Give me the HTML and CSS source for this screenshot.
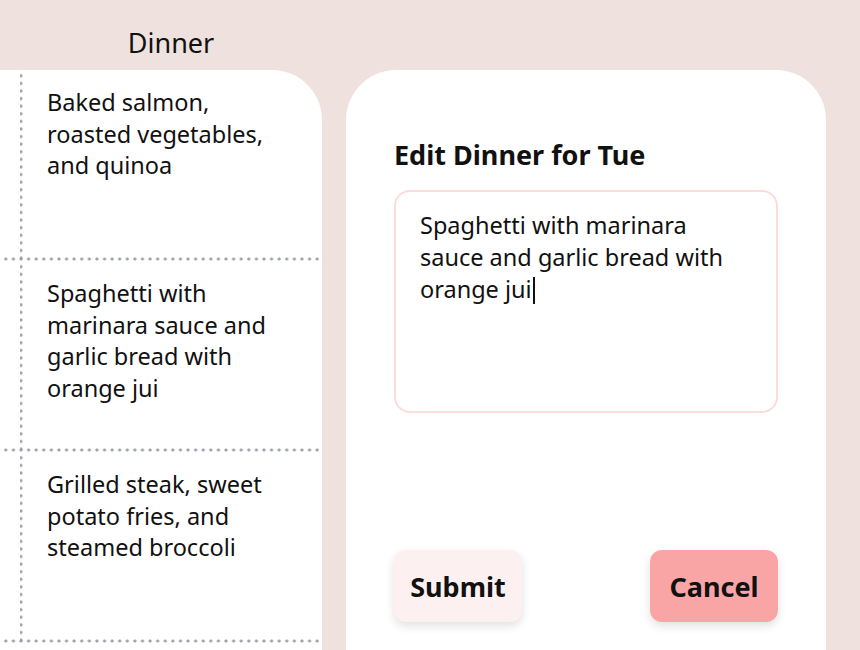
FILE: index.html
```html
<!DOCTYPE html>
<html>
<head>
<meta charset="utf-8">
<link rel="stylesheet" href="styles.css">
</head>
<body>
<div class="page">
  <section class="planner">
    <div class="col-head">
      <div class="head-spacer"></div>
      <div class="head-title">Dinner</div>
    </div>
    <div class="plan-card">
      <div class="row">
        <div class="row-gutter"></div>
        <div class="row-cell">Baked salmon, roasted vegetables, and quinoa</div>
      </div>
      <div class="row">
        <div class="row-gutter"></div>
        <div class="row-cell">Spaghetti with marinara sauce and garlic bread with orange jui</div>
      </div>
      <div class="row">
        <div class="row-gutter"></div>
        <div class="row-cell">Grilled steak, sweet potato fries, and steamed broccoli</div>
      </div>
    </div>
  </section>
  <section class="editor">
    <h2 class="editor-title">Edit Dinner for Tue</h2>
    <div class="text-box">Spaghetti with marinara sauce and garlic bread with orange jui<span class="caret"></span></div>
    <div class="actions">
      <button class="btn btn-submit">Submit</button>
      <button class="btn btn-cancel">Cancel</button>
    </div>
  </section>
</div>
</body>
</html>
```

FILE: styles.css
```css
html, body {
  margin: 0;
  padding: 0;
  height: 100%;
  overflow: hidden;
}
body {
  background: #efe1dd;
  font-family: "Noto Sans", "Open Sans", sans-serif;
  color: #111;
}
.page {
  display: flex;
  gap: 24px;
  height: 650px;
}
.planner {
  width: 322px;
  flex: none;
  display: flex;
  flex-direction: column;
}
.col-head {
  display: flex;
  height: 70px;
}
.head-spacer {
  width: 20px;
}
.head-title {
  flex: 1;
  text-align: center;
  font-size: 27px;
  line-height: 36px;
  padding-top: 25px;
}
.plan-card {
  background: #fff;
  border-top-right-radius: 50px;
  flex: 1;
}
.row {
  display: flex;
  height: 191px;
  background-image: radial-gradient(circle, #9ea2b0 1.3px, transparent 1.8px);
  background-size: 7.6px 4px;
  background-repeat: repeat-x;
  background-position: 2px bottom;
}
.row-gutter {
  width: 20px;
  flex: none;
}
.row-cell {
  flex: 1;
  padding: 17px 40px 0 27px;
  font-size: 23.5px;
  line-height: 31.5px;
  background-image: radial-gradient(circle, #9ea2b0 1.3px, transparent 1.8px);
  background-size: 4px 7.6px;
  background-repeat: repeat-y;
  background-position: -1px 2px;
}
.editor {
  width: 480px;
  flex: none;
  background: #fff;
  border-top-left-radius: 50px;
  border-top-right-radius: 50px;
  margin-top: 70px;
  padding: 68px 48px 0 48px;
  box-sizing: border-box;
}
.editor-title {
  margin: 0;
  font-size: 27px;
  font-weight: 700;
  line-height: 34px;
  color: #111;
}
.text-box {
  margin-top: 18px;
  height: 223px;
  box-sizing: border-box;
  border: 2px solid #fcdcda;
  border-radius: 16px;
  padding: 17px 24px 0 24px;
  font-size: 23.5px;
  line-height: 32px;
}
.caret {
  display: inline-block;
  width: 2px;
  height: 27px;
  background: #111;
  vertical-align: -6px;
  margin-left: 1px;
}
.actions {
  display: flex;
  justify-content: space-between;
  margin-top: 137px;
}
.btn {
  width: 128px;
  height: 72px;
  border: none;
  border-radius: 12px;
  font-family: "Noto Sans", "Open Sans", sans-serif;
  font-size: 27px;
  font-weight: 700;
  color: #111;
  box-shadow: 0 4px 10px rgba(0, 0, 0, 0.12);
  padding: 0;
}
.btn-submit {
  background: #fdf0f0;
}
.btn-cancel {
  background: #f9a5a5;
}
```
